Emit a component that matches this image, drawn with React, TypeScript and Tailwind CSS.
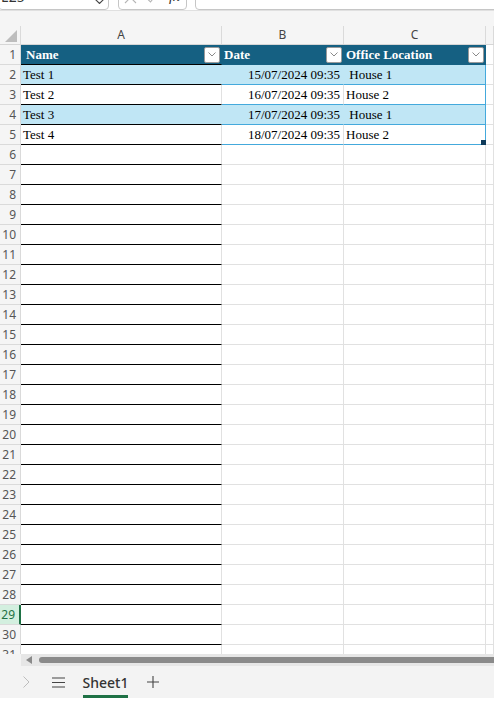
import React from 'react'

const serif = "font-['Liberation_Serif','Times_New_Roman',serif]"
const sans = "font-['Noto_Sans','Open_Sans',sans-serif]"

const data = [
  { name: 'Test 1', date: '15/07/2024 09:35', loc: '\u00a0House 1' },
  { name: 'Test 2', date: '16/07/2024 09:35', loc: 'House 2' },
  { name: 'Test 3', date: '17/07/2024 09:35', loc: '\u00a0House 1' },
  { name: 'Test 4', date: '18/07/2024 09:35', loc: 'House 2' },
]

const FilterButton = () => (
  <div className="w-[16px] h-[16px] bg-white border border-[#9a9a9a] rounded-[2px] flex items-center justify-center shrink-0">
    <svg width="8" height="5" viewBox="0 0 8 5" fill="none">
      <path d="M0.5 0.5 L4 4 L7.5 0.5" stroke="#8a8a8a" strokeWidth="1" />
    </svg>
  </div>
)

const Toolbar = () => (
  <div className="h-[11px] overflow-hidden border-b border-[#e0e0e0] bg-white flex items-end">
    <div className={`-ml-[2px] w-[111px] h-[24px] shrink-0 border border-[#c6c6c6] rounded-[4px] flex items-end justify-between px-[2px] pb-[5px] ${sans}`}>
      <span className="text-[14px] leading-[14px] text-[#333]">E25</span>
      <svg width="9" height="5" viewBox="0 0 9 5" fill="none" className="mb-[0px] mr-[2px]">
        <path d="M0.5 0.5 L4.5 4.5 L8.5 0.5" stroke="#444" strokeWidth="1.1" />
      </svg>
    </div>
    <div className="ml-[9px] w-[69px] h-[24px] shrink-0 border border-[#c6c6c6] rounded-[4px] flex items-end pb-[5px] pl-[5px] gap-[7px]">
      <svg width="13" height="13" viewBox="0 0 13 13" fill="none">
        <path d="M1 1 L12 12 M12 1 L1 12" stroke="#b5b5b5" strokeWidth="1.1" />
      </svg>
      <svg width="13" height="10" viewBox="0 0 13 10" fill="none" className="mb-[1px]">
        <path d="M0.5 3 L6.5 9 L12.5 1" stroke="#b5b5b5" strokeWidth="1.1" />
      </svg>
      <span className={`ml-[5px] text-[15px] leading-[15px] italic text-[#333] ${serif}`}>fx</span>
    </div>
    <div className="ml-[8px] flex-1 h-[24px] border border-[#c6c6c6] rounded-[4px] -mr-[6px]" />
  </div>
)

const ColumnHeaders = () => (
  <div className={`flex h-[19px] border-b border-[#d6d6d6] bg-[#f5f5f5] text-[12px] text-[#444] ${sans}`}>
    <div className="w-[21px] shrink-0 border-r border-[#dadada] flex items-end justify-end pr-[3px] pb-[2px]">
      <svg width="12" height="12" viewBox="0 0 12 12">
        <path d="M12 0 L12 12 L0 12 Z" fill="#bdbdbd" />
      </svg>
    </div>
    <div className="w-[201px] shrink-0 border-r border-[#dadada] flex items-center justify-center">A</div>
    <div className="w-[122px] shrink-0 border-r border-[#dadada] flex items-center justify-center">B</div>
    <div className="w-[142px] shrink-0 border-r border-[#dadada] flex items-center justify-center">C</div>
    <div className="w-[8px] shrink-0 border-r border-[#dadada]" />
    <div className="flex-1" />
  </div>
)

const RowHeader = ({ n }: { n: number }) => {
  const selected = n === 29
  return (
    <div
      className={`w-[21px] shrink-0 border-b border-[#dadada] flex items-center justify-end pr-[4px] text-[12px] ${sans} ${
        selected
          ? 'bg-[#d3efdf] text-[#1e7145] border-r-2 border-r-[#1e7145]'
          : 'bg-[#f5f5f5] text-[#555] border-r border-r-[#dadada]'
      }`}
    >
      {n}
    </div>
  )
}

const HeaderRow = () => (
  <div className="flex h-[20px]">
    <RowHeader n={1} />
    <div className={`w-[201px] shrink-0 bg-[#156082] border-b border-black border-r border-r-[#156082] flex items-center justify-between pl-[5px] pr-[1px] text-white font-bold text-[13px] ${serif}`}>
      <span>Name</span>
      <FilterButton />
    </div>
    <div className={`w-[122px] shrink-0 bg-[#156082] border-b border-[#156082] border-r border-r-[#156082] flex items-center justify-between pl-[2px] pr-[1px] text-white font-bold text-[13px] ${serif}`}>
      <span>Date</span>
      <FilterButton />
    </div>
    <div className={`w-[142px] shrink-0 bg-[#156082] border-b border-[#156082] border-r border-r-[#156082] flex items-center justify-between pl-[2px] pr-[1px] text-white font-bold text-[13px] ${serif}`}>
      <span>Office Location</span>
      <FilterButton />
    </div>
    <div className="w-[8px] shrink-0 border-b border-r border-[#e1e1e1]" />
    <div className="flex-1 border-b border-[#e1e1e1]" />
  </div>
)

const DataRow = ({ n, row, last }: { n: number; row: (typeof data)[number]; last: boolean }) => {
  const band = n % 2 === 0
  const fill = band ? 'bg-[#c0e6f5]' : 'bg-white'
  return (
    <div className={`flex h-[20px] text-[13px] text-black ${serif}`}>
      <RowHeader n={n} />
      <div className={`w-[201px] shrink-0 ${fill} border-b border-black border-r ${band ? 'border-r-[#c0e6f5]' : 'border-r-[#e1e1e1]'} flex items-center pl-[2px]`}>
        {row.name}
      </div>
      <div className={`w-[122px] shrink-0 ${fill} border-b border-[#44a9dc] border-r ${band ? 'border-r-[#c0e6f5]' : 'border-r-[#e1e1e1]'} flex items-center justify-end pr-[3px]`}>
        {row.date}
      </div>
      <div className={`relative w-[142px] shrink-0 ${fill} border-b border-[#44a9dc] border-r border-r-[#44a9dc] flex items-center pl-[2px] whitespace-pre`}>
        {row.loc}
        {last && <div className="absolute -right-[1px] -bottom-[1px] w-[5px] h-[5px] bg-[#0f3b5a]" />}
      </div>
      <div className="w-[8px] shrink-0 border-b border-r border-[#e1e1e1]" />
      <div className="flex-1 border-b border-[#e1e1e1]" />
    </div>
  )
}

const EmptyRow = ({ n }: { n: number }) => (
  <div className="flex h-[20px]">
    <RowHeader n={n} />
    <div className="w-[201px] shrink-0 border-b border-black border-r border-r-[#e1e1e1]" />
    <div className="w-[122px] shrink-0 border-b border-r border-[#e1e1e1]" />
    <div className="w-[142px] shrink-0 border-b border-r border-[#e1e1e1]" />
    <div className="w-[8px] shrink-0 border-b border-r border-[#e1e1e1]" />
    <div className="flex-1 border-b border-[#e1e1e1]" />
  </div>
)

export default function App() {
  const empties = Array.from({ length: 26 }, (_, i) => i + 6)
  return (
    <div className="w-[494px] h-[717px] bg-white overflow-hidden flex flex-col">
      <Toolbar />
      <div className="h-[15px] bg-[#f5f5f5]" />
      <ColumnHeaders />
      <div className="h-[609px] overflow-hidden shrink-0">
        <HeaderRow />
        {data.map((row, i) => (
          <DataRow key={i} n={i + 2} row={row} last={i === data.length - 1} />
        ))}
        {empties.map((n) => (
          <EmptyRow key={n} n={n} />
        ))}
      </div>
      {/* horizontal scrollbar */}
      <div className="flex h-[12px] bg-[#f3f3f3] shrink-0">
        <div className="w-[21px] shrink-0" />
        <div className="flex-1 bg-[#e6e6e6] flex items-center pl-[5px]">
          <svg width="6" height="8" viewBox="0 0 6 8">
            <path d="M6 0 L6 8 L0 4 Z" fill="#8a8a8a" />
          </svg>
          <div className="ml-[7px] flex-1 h-[6px] bg-[#8a8a8a] rounded-l-full" />
        </div>
      </div>
      {/* sheet tabs */}
      <div className={`h-[32px] bg-[#f3f3f3] flex items-stretch shrink-0 ${sans}`}>
        <div className="w-[46px] flex items-center justify-end pr-[16px]">
          <svg width="7" height="12" viewBox="0 0 7 12" fill="none">
            <path d="M0.5 0.5 L6 6 L0.5 11.5" stroke="#bdbdbd" strokeWidth="1" />
          </svg>
        </div>
        <div className="w-[37px] flex items-center">
          <svg width="13" height="11" viewBox="0 0 13 11" fill="none" className="ml-[6px]">
            <path d="M0 1 H13 M0 5.5 H13 M0 10 H13" stroke="#444" strokeWidth="1.2" />
          </svg>
        </div>
        <div className="w-[45px] relative flex items-center justify-center text-[14px] font-medium text-[#333]">
          Sheet1
          <div className="absolute left-0 right-0 bottom-0 h-[3px] bg-[#1e7145]" />
        </div>
        <div className="flex items-center ml-[19px]">
          <svg width="12" height="12" viewBox="0 0 12 12" fill="none">
            <path d="M6 0 V12 M0 6 H12" stroke="#444" strokeWidth="1.1" />
          </svg>
        </div>
      </div>
      <div className="flex-1 bg-white" />
    </div>
  )
}
